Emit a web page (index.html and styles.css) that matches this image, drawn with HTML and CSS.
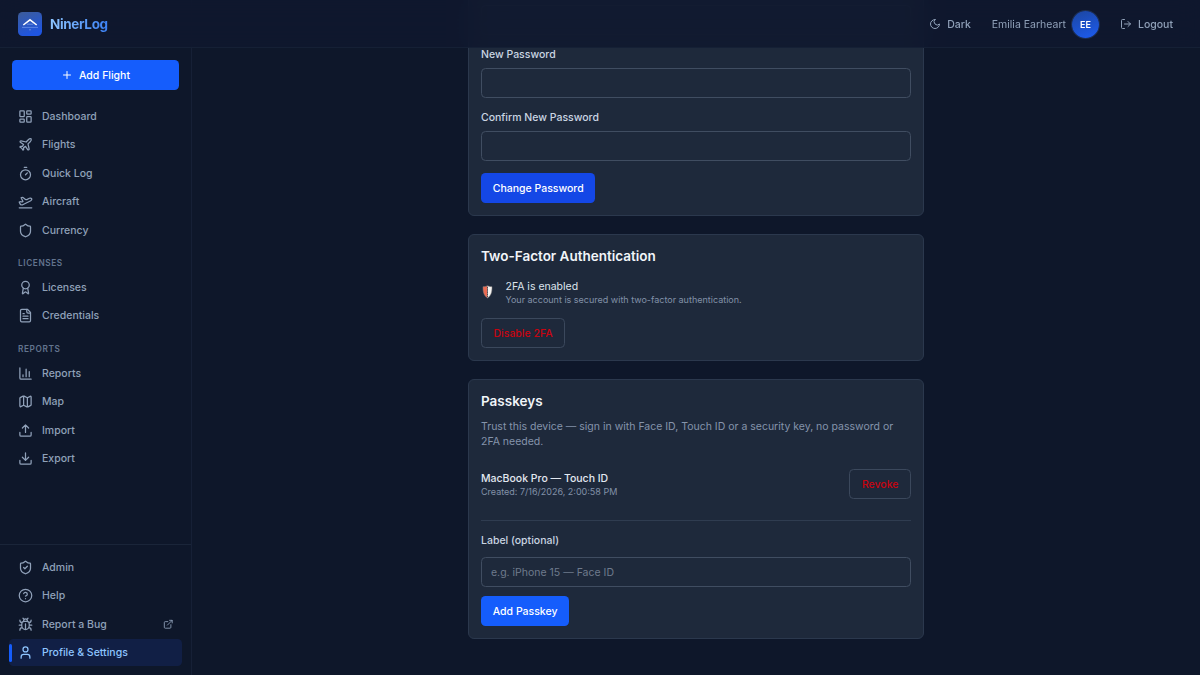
FILE: index.html
```
<!DOCTYPE html>
<html lang="en">

<head>
    <meta charset="UTF-8">
    <meta name="viewport" content="width=device-width, initial-scale=1.0">
    <title>NinerLog</title>
    <link rel="stylesheet" href="styles.css">
</head>

<body>

    <header class="header">
        <div class="brand">
            <svg class="logo" viewBox="0 0 24 24">
                <defs>
                    <linearGradient id="logo-bg" x1="0" y1="0" x2="0.4" y2="1">
                        <stop offset="0" stop-color="#3d5c98"/>
                        <stop offset="1" stop-color="#1f55e0"/>
                    </linearGradient>
                </defs>
                <rect width="24" height="24" rx="4.5" fill="url(#logo-bg)"/>
                <path d="M5.3 13 12 7.8l6.7 5.200" fill="none" stroke="#fff" stroke-width="1.5"/>
                <path d="M9 12.2h6" stroke="#9db9f5" stroke-width="0.6"/>
                <path d="M4 15.4h16" stroke="#7fa2f2" stroke-width="0.6"/>
                <circle cx="12" cy="17.8" r="0.5" fill="#c5d6ff"/>
            </svg>
            <span class="brand-name">NinerLog</span>
        </div>
        <div class="header-right">
            <button class="header-btn">
                <svg class="icon small" viewBox="0 0 24 24"><path d="M12 3a6 6 0 0 0 9 9 9 9 0 1 1-9-9Z"/></svg>
                Dark
            </button>
            <div class="user">
                <span>Emilia Earheart</span>
                <span class="avatar">EE</span>
            </div>
            <button class="header-btn">
                <svg class="icon small" viewBox="0 0 24 24"><path d="M9 21H5a2 2 0 0 1-2-2V5a2 2 0 0 1 2-2h4M16 17l5-5-5-5M21 12H9"/></svg>
                Logout
            </button>
        </div>
    </header>

    <div class="layout">
        <aside class="sidebar">
            <button class="btn add-flight">
                <svg class="icon small" viewBox="0 0 24 24"><path d="M5 12h14M12 5v14"/></svg>
                Add Flight
            </button>

            <nav class="nav">
                <a class="nav-item">
                    <svg class="icon" viewBox="0 0 24 24"><rect x="3" y="3" width="7" height="9" rx="1"/><rect x="14" y="3" width="7" height="5" rx="1"/><rect x="14" y="12" width="7" height="9" rx="1"/><rect x="3" y="16" width="7" height="5" rx="1"/></svg>
                    Dashboard
                </a>
                <a class="nav-item">
                    <svg class="icon" viewBox="0 0 24 24"><path d="M17.8 19.2 16 11l3.5-3.5C21 6 21.5 4 21 3c-1-.5-3 0-4.5 1.5L13 8 4.8 6.2c-.5-.1-.9.1-1.1.5l-.3.5c-.2.5-.1 1 .3 1.3L9 12l-2 3H4l-1 1 3 2 2 3 1-1v-3l3-2 3.5 5.3c.3.4.8.5 1.3.3l.5-.2c.4-.3.6-.7.5-1.2z"/></svg>
                    Flights
                </a>
                <a class="nav-item">
                    <svg class="icon" viewBox="0 0 24 24"><path d="M10 2h4M12 14l3-3"/><circle cx="12" cy="14" r="8"/></svg>
                    Quick Log
                </a>
                <a class="nav-item">
                    <svg class="icon" viewBox="0 0 24 24"><path d="M2 22h20"/><path d="M6.36 17.4 4 17l-2-4 1.1-.55a2 2 0 0 1 1.8 0l.17.1a2 2 0 0 0 1.8 0L8 12 5 6l.9-.45a2 2 0 0 1 2.09.2l4.02 3a2 2 0 0 0 2.1.2l4.19-2.06a2.41 2.41 0 0 1 1.73-.17L21 7a1.4 1.4 0 0 1 .87 1.99l-.38.76c-.23.46-.6.84-1.07 1.08L7.58 17.2a2 2 0 0 1-1.22.18Z"/></svg>
                    Aircraft
                </a>
                <a class="nav-item">
                    <svg class="icon" viewBox="0 0 24 24"><path d="M20 13c0 5-3.5 7.5-7.66 8.95a1 1 0 0 1-.67-.01C7.5 20.5 4 18 4 13V6a1 1 0 0 1 1-1c2 0 4.5-1.2 6.24-2.72a1.17 1.17 0 0 1 1.52 0C14.51 3.81 17 5 19 5a1 1 0 0 1 1 1z"/></svg>
                    Currency
                </a>

                <div class="nav-title">LICENSES</div>
                <a class="nav-item">
                    <svg class="icon" viewBox="0 0 24 24"><path d="m15.477 12.89 1.515 8.526a.5.5 0 0 1-.81.47l-3.58-2.687a1 1 0 0 0-1.197 0l-3.586 2.686a.5.5 0 0 1-.81-.469l1.514-8.526"/><circle cx="12" cy="8" r="6"/></svg>
                    Licenses
                </a>
                <a class="nav-item">
                    <svg class="icon" viewBox="0 0 24 24"><path d="M15 2H6a2 2 0 0 0-2 2v16a2 2 0 0 0 2 2h12a2 2 0 0 0 2-2V7Z"/><path d="M14 2v4a2 2 0 0 0 2 2h4M10 9H8M16 13H8M16 17H8"/></svg>
                    Credentials
                </a>

                <div class="nav-title">REPORTS</div>
                <a class="nav-item">
                    <svg class="icon" viewBox="0 0 24 24"><path d="M3 3v16a2 2 0 0 0 2 2h16M18 17V9M13 17V5M8 17v-3"/></svg>
                    Reports
                </a>
                <a class="nav-item">
                    <svg class="icon" viewBox="0 0 24 24"><path d="M14.106 5.553a2 2 0 0 0 1.788 0l3.659-1.83A1 1 0 0 1 21 4.619v12.764a1 1 0 0 1-.553.894l-4.553 2.277a2 2 0 0 1-1.788 0l-4.212-2.106a2 2 0 0 0-1.788 0l-3.659 1.83A1 1 0 0 1 3 19.381V6.618a1 1 0 0 1 .553-.894l4.553-2.277a2 2 0 0 1 1.788 0zM15 5.764v15M9 3.236v15"/></svg>
                    Map
                </a>
                <a class="nav-item">
                    <svg class="icon" viewBox="0 0 24 24"><path d="M21 15v4a2 2 0 0 1-2 2H5a2 2 0 0 1-2-2v-4M17 8l-5-5-5 5M12 3v12"/></svg>
                    Import
                </a>
                <a class="nav-item">
                    <svg class="icon" viewBox="0 0 24 24"><path d="M21 15v4a2 2 0 0 1-2 2H5a2 2 0 0 1-2-2v-4M7 10l5 5 5-5M12 15V3"/></svg>
                    Export
                </a>
            </nav>

            <nav class="nav nav-bottom">
                <a class="nav-item">
                    <svg class="icon" viewBox="0 0 24 24"><path d="M20 13c0 5-3.5 7.5-7.66 8.95a1 1 0 0 1-.67-.01C7.5 20.5 4 18 4 13V6a1 1 0 0 1 1-1c2 0 4.5-1.2 6.24-2.72a1.17 1.17 0 0 1 1.52 0C14.51 3.81 17 5 19 5a1 1 0 0 1 1 1z"/><path d="m9 12 2 2 4-4"/></svg>
                    Admin
                </a>
                <a class="nav-item">
                    <svg class="icon" viewBox="0 0 24 24"><circle cx="12" cy="12" r="10"/><path d="M9.09 9a3 3 0 0 1 5.83 1c0 2-3 3-3 3M12 17h.01"/></svg>
                    Help
                </a>
                <a class="nav-item">
                    <svg class="icon" viewBox="0 0 24 24"><path d="m8 2 1.88 1.88M14.12 3.88 16 2M9 7.13v-1a3.003 3.003 0 1 1 6 0v1"/><path d="M12 20c-3.3 0-6-2.7-6-6v-3a4 4 0 0 1 4-4h4a4 4 0 0 1 4 4v3c0 3.3-2.7 6-6 6M12 20v-9M6.53 9C4.6 8.8 3 7.1 3 5M6 13H2M3 21c0-2.1 1.7-3.9 3.8-4M20.97 5c0 2.1-1.6 3.8-3.5 4M22 13h-4M17.2 17c2.1.1 3.8 1.9 3.8 4"/></svg>
                    Report a Bug
                    <svg class="icon external" viewBox="0 0 24 24"><path d="M15 3h6v6M10 14 21 3M18 13v6a2 2 0 0 1-2 2H5a2 2 0 0 1-2-2V8a2 2 0 0 1 2-2h6"/></svg>
                </a>
                <a class="nav-item active">
                    <svg class="icon" viewBox="0 0 24 24"><path d="M19 21v-2a4 4 0 0 0-4-4H9a4 4 0 0 0-4 4v2"/><circle cx="12" cy="7" r="4"/></svg>
                    Profile &amp; Settings
                </a>
            </nav>
        </aside>

        <main class="content">
            <section class="card">
                <input class="input field" type="password">
                <label class="label">New Password</label>
                <input class="input field" type="password">
                <label class="label">Confirm New Password</label>
                <input class="input field" type="password">
                <button class="btn btn-hover">Change Password</button>
            </section>

            <section class="card">
                <h2>Two-Factor Authentication</h2>
                <div class="status">
                    <svg class="shield" viewBox="0 0 12 15">
                        <path d="M6.500 .7C5.100 1.500 3.700 1.700 2 1.700c-.1 5 .9 9 4.500 11.300z" fill="#ea6a52"/>
                        <path d="M6.500 .7c1.400.8 2.800 1 4.500 1 .1 5-.9 9-4.500 11.300z" fill="#f4f4f2"/>
                        <path d="M6.500 .7C5.100 1.500 3.700 1.700 2 1.700c-.1 5 .9 9 4.500 11.300 3.600-2.300 4.600-6.300 4.500-11.300-1.700 0-3.100-.2-4.500-1z" fill="none" stroke="#8b8583" stroke-width="0.5"/>
                        <path d="M6.500 2v10" stroke="#4c4a52" stroke-width="1" stroke-dasharray="1.500 0.700"/>
                    </svg>
                    <div>
                        <p class="status-title">2FA is enabled</p>
                        <p class="small-text">Your account is secured with two-factor authentication.</p>
                    </div>
                </div>
                <button class="btn btn-outline">Disable 2FA</button>
            </section>

            <section class="card">
                <h2>Passkeys</h2>
                <p class="description">Trust this device — sign in with Face ID, Touch ID or a security key, no password or 2FA needed.</p>
                <div class="passkey">
                    <div>
                        <p class="passkey-name">MacBook Pro — Touch ID</p>
                        <p class="small-text">Created: 7/16/2026, 2:00:58 PM</p>
                    </div>
                    <button class="btn btn-outline">Revoke</button>
                </div>
                <div class="passkey-form">
                    <label class="label">Label (optional)</label>
                    <input class="input" type="text" placeholder="e.g. iPhone 15 — Face ID">
                    <button class="btn">Add Passkey</button>
                </div>
            </section>
        </main>
    </div>

</body>

</html>
```

FILE: styles.css
```
* {
    box-sizing: border-box;
}

body {
    margin: 0;
    height: 100vh;
    overflow: hidden;
    background-color: #0e172a;
    color: #e2e8f0;
    font-family: Inter, sans-serif;
    font-size: 10.5px;
    line-height: 15px;
}

h2,
p {
    margin: 0;
}

button,
input {
    font-family: inherit;
    font-size: inherit;
    line-height: inherit;
}

.icon {
    width: 15px;
    height: 15px;
    flex-shrink: 0;
    fill: none;
    stroke: currentColor;
    stroke-width: 2;
    stroke-linecap: round;
    stroke-linejoin: round;
}

.icon.small {
    width: 12px;
    height: 12px;
}

/* Header */
.header {
    position: fixed;
    top: 0;
    left: 0;
    right: 0;
    z-index: 10;
    height: 48px;
    padding: 1px 27px 0 18px;
    display: flex;
    align-items: center;
    justify-content: space-between;
    background-color: rgba(15, 23, 46, 0.85);
    border-bottom: 1px solid #152035;
    backdrop-filter: blur(12px);
}

.brand {
    display: flex;
    align-items: center;
    gap: 8px;
}

.logo {
    width: 24px;
    height: 24px;
}

.brand-name {
    font-size: 13.5px;
    font-weight: 700;
    letter-spacing: -0.35px;
    background: linear-gradient(90deg, #8ec5ff, #3b82f6);
    background-clip: text;
    -webkit-background-clip: text;
    color: transparent;
}

.header-right {
    display: flex;
    align-items: center;
    gap: 21px;
    color: #90a1b9;
}

.header-btn {
    display: flex;
    align-items: center;
    gap: 6px;
    padding: 0;
    background: none;
    border: none;
    color: inherit;
    font-weight: 500;
}

.user {
    display: flex;
    align-items: center;
    gap: 6px;
}

.avatar {
    width: 27px;
    height: 27px;
    border-radius: 50%;
    display: flex;
    align-items: center;
    justify-content: center;
    background: linear-gradient(160deg, #1c46a0, #1d5cf0);
    box-shadow: 0 0 0 1px #1e2f50;
    color: white;
    font-size: 9px;
    font-weight: 600;
}

/* Sidebar */
.layout {
    display: flex;
    height: 100%;
}

.sidebar {
    width: 192px;
    padding-top: 60px;
    display: flex;
    flex-direction: column;
    border-right: 1px solid #162036;
    background-color: #0e172a;
}

.add-flight {
    margin: 0 12px 12.5px;
    gap: 6px;
}

.nav {
    display: flex;
    flex-direction: column;
    gap: 1.5px;
    padding: 0 9px;
}

.nav-item {
    display: flex;
    align-items: center;
    gap: 9px;
    height: 27px;
    padding: 0 9px;
    border-radius: 4.5px;
    color: #90a1b9;
    font-weight: 500;
}

.nav-item.active {
    position: relative;
    background-color: #111f45;
    color: #8ec5ff;
}

.nav-item.active::before {
    content: "";
    position: absolute;
    left: 0;
    top: 4.5px;
    bottom: 4.5px;
    width: 3px;
    border-radius: 2px;
    background-color: #155dfc;
}

.nav-title {
    margin: 12px 9px 3px;
    color: #62748e;
    font-size: 8.25px;
    font-weight: 600;
    line-height: 12.3px;
    letter-spacing: 0.6px;
}

.nav-bottom {
    margin-top: auto;
    padding: 9px;
    border-top: 1px solid #1a2539;
}

.icon.external {
    width: 10.5px;
    height: 10.5px;
    margin-left: auto;
}

/* Content */
.content {
    flex: 1;
    display: flex;
    flex-direction: column;
    align-items: center;
    justify-content: flex-end;
    gap: 18px;
    padding-bottom: 36px;
}

.card {
    width: 456px;
    padding: 12px;
    background-color: #1e293b;
    border: 1px solid #2b384d;
    border-radius: 6px;
}

.card h2 {
    color: #f1f5f9;
    font-size: 13.5px;
    font-weight: 600;
    line-height: 19px;
}

.label {
    display: block;
    margin-bottom: 6px;
    color: #cad5e2;
    font-weight: 500;
}

.input {
    display: block;
    width: 100%;
    height: 30px;
    padding: 0 9px;
    background-color: transparent;
    border: 1px solid #404d61;
    border-radius: 4.5px;
    color: #e2e8f0;
}

.input::placeholder {
    color: #6f7b8d;
}

.input.field {
    margin-bottom: 12px;
}

.btn {
    display: inline-flex;
    align-items: center;
    justify-content: center;
    height: 30px;
    padding: 0 11.75px;
    vertical-align: top;
    background-color: #155dfc;
    border: none;
    border-radius: 4.5px;
    color: white;
    font-weight: 500;
}

.btn-hover {
    background-color: #1447e6;
}

.btn-outline {
    padding: 0 11.5px;
    background-color: transparent;
    border: 1px solid #3b485c;
    color: #c90410;
}

.status {
    display: flex;
    align-items: center;
    gap: 12.5px;
    margin: 13px 0 12px;
}

.shield {
    width: 12px;
    height: 15px;
}

.status-title {
    color: #dde4ec;
}

.small-text {
    color: #8291a8;
    font-size: 9px;
    line-height: 12px;
}

.description {
    margin-top: 8px;
    color: #8594ab;
}

.passkey {
    display: flex;
    align-items: center;
    justify-content: space-between;
    margin: 20px 0 21px;
}

.passkey-name {
    color: #e2e8f0;
    font-weight: 500;
}

.passkey-form {
    padding-top: 12px;
    border-top: 1px solid #2f3c50;
}

.passkey-form .label,
.passkey-form .input {
    margin-bottom: 9px;
}

.passkey-form .btn {
    margin: 0;
}
```
